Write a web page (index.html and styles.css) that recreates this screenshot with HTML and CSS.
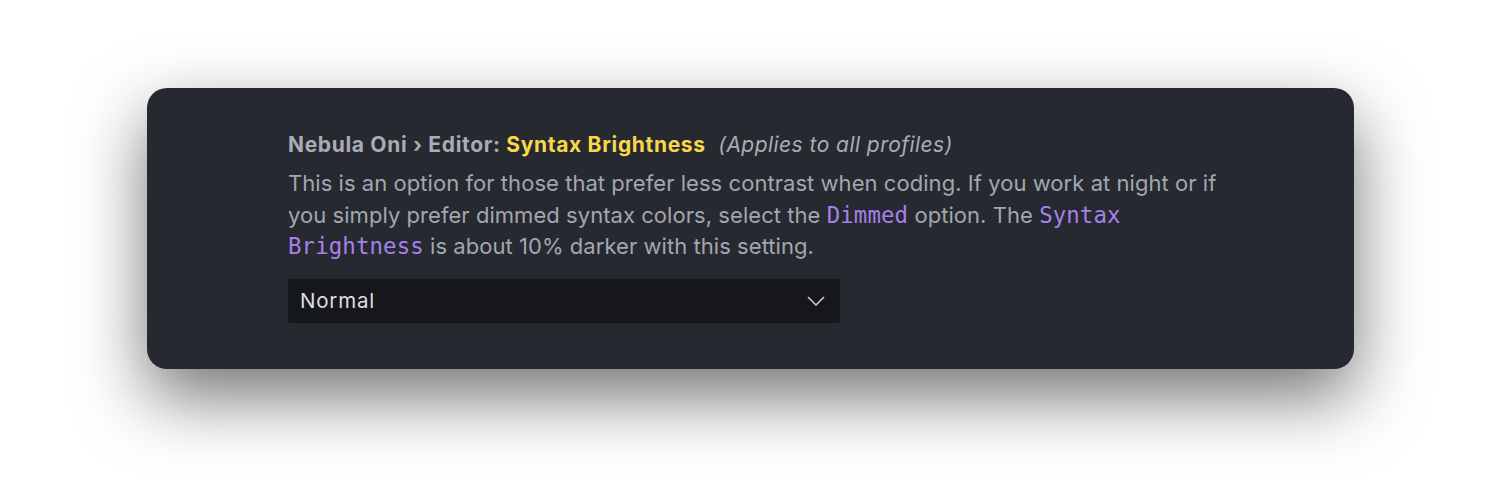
FILE: index.html
```html
<!DOCTYPE html>
<html>
<head>
<meta charset="utf-8">
<link rel="stylesheet" href="styles.css">
</head>
<body>
<div class="stage">
  <div class="card">
    <div class="setting">
      <div class="title">
        <span class="crumb">Nebula Oni › Editor: </span><span class="name">Syntax Brightness</span>
        <span class="scope">(Applies to all profiles)</span>
      </div>
      <div class="desc">This is an option for those that prefer less contrast when coding. If you work at night or if you simply prefer dimmed syntax colors, select the <code>Dimmed</code> option. The <code>Syntax Brightness</code> is about 10% darker with this setting.</div>
      <div class="select">
        <span class="value">Normal</span>
        <svg class="chev" width="18" height="10" viewBox="0 0 18 10"><path d="M1 1 L9 9 L17 1" fill="none" stroke="#c9ccd3" stroke-width="1.6"/></svg>
      </div>
    </div>
  </div>
</div>
</body>
</html>
```
FILE: styles.css
```css
html, body {
  margin: 0;
  padding: 0;
  background: #ffffff;
  width: 1501px;
  height: 501px;
  overflow: hidden;
}
.stage {
  padding: 88px 147px 0 147px;
}
.card {
  width: 1207px;
  height: 281px;
  box-sizing: border-box;
  background: #272930;
  border-radius: 20px;
  box-shadow: 0 28px 70px rgba(0,0,0,0.55);
  padding: 0 0 0 141px;
  display: flex;
  font-family: "Inter", "Noto Sans", sans-serif;
}
.setting {
  padding-top: 41px;
  width: 940px;
}
.title {
  font-size: 21px;
  line-height: 32px;
  letter-spacing: 0.67px;
  color: #a9acb6;
  white-space: nowrap;
}
.crumb, .name { font-weight: 700; }
.name { color: #f8d84a; }
.scope {
  font-style: italic;
  margin-left: 6px;
  letter-spacing: 0.45px;
}
.desc {
  margin-top: 7px;
  font-size: 22px;
  letter-spacing: 0.05px;
  line-height: 31.5px;
  color: #a2a6b0;
}
code {
  font-family: "DejaVu Sans Mono", monospace;
  font-size: 22.4px;
  line-height: 1;
  letter-spacing: 0.1px;
  color: #a681e8;
}
.select {
  margin-top: 16px;
  width: 552px;
  height: 44px;
  box-sizing: border-box;
  background: #16171b;
  border-radius: 3px;
  display: flex;
  align-items: center;
  justify-content: space-between;
  padding: 0 15px 0 12px;
}
.value {
  color: #dcdee3;
  font-size: 20.5px;
  letter-spacing: 0.8px;
}
.chev { display: block; }
```
